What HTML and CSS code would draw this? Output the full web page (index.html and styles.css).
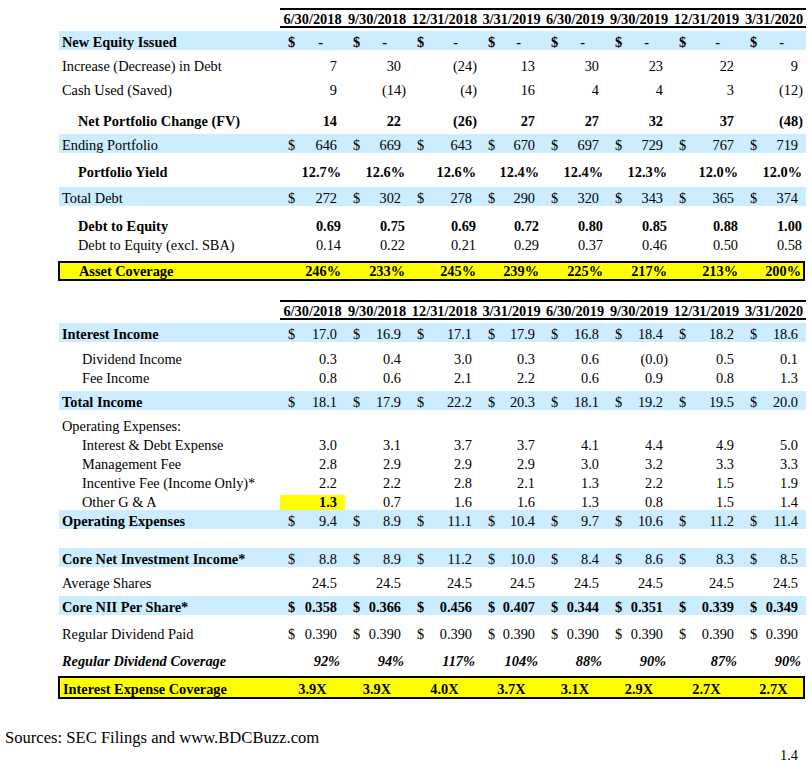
FILE: index.html
```html
<!DOCTYPE html>
<html>
<head>
<meta charset="utf-8">
<link rel="stylesheet" href="styles.css">
</head>
<body>
<div class="sheet">
  <div class="row hdr">
    <div></div>
    <div class="h">6/30/2018</div><div class="h">9/30/2018</div><div class="h">12/31/2018</div><div class="h">3/31/2019</div><div class="h">6/30/2019</div><div class="h">9/30/2019</div><div class="h">12/31/2019</div><div class="h">3/31/2020</div>
  </div>
  <div class="row blue b h19 mt3">
    <div class="lbl">New Equity Issued</div>
    <div class="c"><span class="d">$</span><span class="dash">-</span></div>
    <div class="c"><span class="d">$</span><span class="dash">-</span></div>
    <div class="c"><span class="d">$</span><span class="dash">-</span></div>
    <div class="c"><span class="d">$</span><span class="dash">-</span></div>
    <div class="c"><span class="d">$</span><span class="dash">-</span></div>
    <div class="c"><span class="d">$</span><span class="dash">-</span></div>
    <div class="c"><span class="d">$</span><span class="dash">-</span></div>
    <div class="c"><span class="d">$</span><span class="dash">-</span></div>
  </div>
  <div class="row h24">
    <div class="lbl">Increase (Decrease) in Debt</div>
    <div class="c">7</div><div class="c">30</div><div class="c p">(24)</div><div class="c">13</div><div class="c">30</div><div class="c">23</div><div class="c">22</div><div class="c">9</div>
  </div>
  <div class="row h24">
    <div class="lbl">Cash Used (Saved)</div>
    <div class="c">9</div><div class="c p">(14)</div><div class="c p">(4)</div><div class="c">16</div><div class="c">4</div><div class="c">4</div><div class="c">3</div><div class="c p">(12)</div>
  </div>
  <div class="row b h31">
    <div class="lbl in1">Net Portfolio Change (FV)</div>
    <div class="c">14</div><div class="c">22</div><div class="c p">(26)</div><div class="c">27</div><div class="c">27</div><div class="c">32</div><div class="c">37</div><div class="c p">(48)</div>
  </div>
  <div class="row blue h19 mt5">
    <div class="lbl">Ending Portfolio</div>
    <div class="c"><span class="d">$</span>646</div>
    <div class="c"><span class="d">$</span>669</div>
    <div class="c"><span class="d">$</span>643</div>
    <div class="c"><span class="d">$</span>670</div>
    <div class="c"><span class="d">$</span>697</div>
    <div class="c"><span class="d">$</span>729</div>
    <div class="c"><span class="d">$</span>767</div>
    <div class="c"><span class="d">$</span>719</div>
  </div>
  <div class="row b h27">
    <div class="lbl in1">Portfolio Yield</div>
    <div class="c pc">12.7%</div><div class="c pc">12.6%</div><div class="c pc">12.6%</div><div class="c pc">12.4%</div><div class="c pc">12.4%</div><div class="c pc">12.3%</div><div class="c pc">12.0%</div><div class="c pc">12.0%</div>
  </div>
  <div class="row blue h19 mt7">
    <div class="lbl">Total Debt</div>
    <div class="c"><span class="d">$</span>272</div>
    <div class="c"><span class="d">$</span>302</div>
    <div class="c"><span class="d">$</span>278</div>
    <div class="c"><span class="d">$</span>290</div>
    <div class="c"><span class="d">$</span>320</div>
    <div class="c"><span class="d">$</span>343</div>
    <div class="c"><span class="d">$</span>365</div>
    <div class="c"><span class="d">$</span>374</div>
  </div>
  <div class="row b h28">
    <div class="lbl in1">Debt to Equity</div>
    <div class="c pc">0.69</div><div class="c pc">0.75</div><div class="c pc">0.69</div><div class="c pc">0.72</div><div class="c pc">0.80</div><div class="c pc">0.85</div><div class="c pc">0.88</div><div class="c pc">1.00</div>
  </div>
  <div class="row h19">
    <div class="lbl in1">Debt to Equity (excl. SBA)</div>
    <div class="c pc">0.14</div><div class="c pc">0.22</div><div class="c pc">0.21</div><div class="c pc">0.29</div><div class="c pc">0.37</div><div class="c pc">0.46</div><div class="c pc">0.50</div><div class="c pc">0.58</div>
  </div>
  <div class="row box b mt8 bx16">
    <div class="lbl in1">Asset Coverage</div>
    <div class="c pc">246%</div><div class="c pc">233%</div><div class="c pc">245%</div><div class="c pc">239%</div><div class="c pc">225%</div><div class="c pc">217%</div><div class="c pc">213%</div><div class="c pc">200%</div>
  </div>

  <div class="row hdr mt19">
    <div></div>
    <div class="h">6/30/2018</div><div class="h">9/30/2018</div><div class="h">12/31/2018</div><div class="h">3/31/2019</div><div class="h">6/30/2019</div><div class="h">9/30/2019</div><div class="h">12/31/2019</div><div class="h">3/31/2020</div>
  </div>
  <div class="row blue h19 mt3">
    <div class="lbl b">Interest Income</div>
    <div class="c"><span class="d">$</span>17.0</div>
    <div class="c"><span class="d">$</span>16.9</div>
    <div class="c"><span class="d">$</span>17.1</div>
    <div class="c"><span class="d">$</span>17.9</div>
    <div class="c"><span class="d">$</span>16.8</div>
    <div class="c"><span class="d">$</span>18.4</div>
    <div class="c"><span class="d">$</span>18.2</div>
    <div class="c"><span class="d">$</span>18.6</div>
  </div>
  <div class="row h25">
    <div class="lbl in2">Dividend Income</div>
    <div class="c">0.3</div><div class="c">0.4</div><div class="c">3.0</div><div class="c">0.3</div><div class="c">0.6</div><div class="c p">(0.0)</div><div class="c">0.5</div><div class="c">0.1</div>
  </div>
  <div class="row h19">
    <div class="lbl in2">Fee Income</div>
    <div class="c">0.8</div><div class="c">0.6</div><div class="c">2.1</div><div class="c">2.2</div><div class="c">0.6</div><div class="c">0.9</div><div class="c">0.8</div><div class="c">1.3</div>
  </div>
  <div class="row blue h19 mt5">
    <div class="lbl b">Total Income</div>
    <div class="c"><span class="d">$</span>18.1</div>
    <div class="c"><span class="d">$</span>17.9</div>
    <div class="c"><span class="d">$</span>22.2</div>
    <div class="c"><span class="d">$</span>20.3</div>
    <div class="c"><span class="d">$</span>18.1</div>
    <div class="c"><span class="d">$</span>19.2</div>
    <div class="c"><span class="d">$</span>19.5</div>
    <div class="c"><span class="d">$</span>20.0</div>
  </div>
  <div class="row h24">
    <div class="lbl">Operating Expenses:</div>
  </div>
  <div class="row h19">
    <div class="lbl in2">Interest &amp; Debt Expense</div>
    <div class="c">3.0</div><div class="c">3.1</div><div class="c">3.7</div><div class="c">3.7</div><div class="c">4.1</div><div class="c">4.4</div><div class="c">4.9</div><div class="c">5.0</div>
  </div>
  <div class="row h19">
    <div class="lbl in2">Management Fee</div>
    <div class="c">2.8</div><div class="c">2.9</div><div class="c">2.9</div><div class="c">2.9</div><div class="c">3.0</div><div class="c">3.2</div><div class="c">3.3</div><div class="c">3.3</div>
  </div>
  <div class="row h19">
    <div class="lbl in2">Incentive Fee (Income Only)*</div>
    <div class="c">2.2</div><div class="c">2.2</div><div class="c">2.8</div><div class="c">2.1</div><div class="c">1.3</div><div class="c">2.2</div><div class="c">1.5</div><div class="c">1.9</div>
  </div>
  <div class="row h19">
    <div class="lbl in2">Other G &amp; A</div>
    <div class="c hl b">1.3</div><div class="c">0.7</div><div class="c">1.6</div><div class="c">1.6</div><div class="c">1.3</div><div class="c">0.8</div><div class="c">1.5</div><div class="c">1.4</div>
  </div>
  <div class="row blue h19">
    <div class="lbl b">Operating Expenses</div>
    <div class="c"><span class="d">$</span>9.4</div>
    <div class="c"><span class="d">$</span>8.9</div>
    <div class="c"><span class="d">$</span>11.1</div>
    <div class="c"><span class="d">$</span>10.4</div>
    <div class="c"><span class="d">$</span>9.7</div>
    <div class="c"><span class="d">$</span>10.6</div>
    <div class="c"><span class="d">$</span>11.2</div>
    <div class="c"><span class="d">$</span>11.4</div>
  </div>
  <div class="row blue h19 mt19">
    <div class="lbl b">Core Net Investment Income*</div>
    <div class="c"><span class="d">$</span>8.8</div>
    <div class="c"><span class="d">$</span>8.9</div>
    <div class="c"><span class="d">$</span>11.2</div>
    <div class="c"><span class="d">$</span>10.0</div>
    <div class="c"><span class="d">$</span>8.4</div>
    <div class="c"><span class="d">$</span>8.6</div>
    <div class="c"><span class="d">$</span>8.3</div>
    <div class="c"><span class="d">$</span>8.5</div>
  </div>
  <div class="row h24">
    <div class="lbl">Average Shares</div>
    <div class="c">24.5</div><div class="c">24.5</div><div class="c">24.5</div><div class="c">24.5</div><div class="c">24.5</div><div class="c">24.5</div><div class="c">24.5</div><div class="c">24.5</div>
  </div>
  <div class="row blue b h19 mt5">
    <div class="lbl">Core NII Per Share*</div>
    <div class="c"><span class="d">$</span>0.358</div>
    <div class="c"><span class="d">$</span>0.366</div>
    <div class="c"><span class="d">$</span>0.456</div>
    <div class="c"><span class="d">$</span>0.407</div>
    <div class="c"><span class="d">$</span>0.344</div>
    <div class="c"><span class="d">$</span>0.351</div>
    <div class="c"><span class="d">$</span>0.339</div>
    <div class="c"><span class="d">$</span>0.349</div>
  </div>
  <div class="row h27">
    <div class="lbl">Regular Dividend Paid</div>
    <div class="c"><span class="d">$</span>0.390</div>
    <div class="c"><span class="d">$</span>0.390</div>
    <div class="c"><span class="d">$</span>0.390</div>
    <div class="c"><span class="d">$</span>0.390</div>
    <div class="c"><span class="d">$</span>0.390</div>
    <div class="c"><span class="d">$</span>0.390</div>
    <div class="c"><span class="d">$</span>0.390</div>
    <div class="c"><span class="d">$</span>0.390</div>
  </div>
  <div class="row b it h27">
    <div class="lbl">Regular Dividend Coverage</div>
    <div class="c ic">92%</div><div class="c ic">94%</div><div class="c ic">117%</div><div class="c ic">104%</div><div class="c ic">88%</div><div class="c ic">90%</div><div class="c ic">87%</div><div class="c ic">90%</div>
  </div>
  <div class="row box b mt7 bx19">
    <div class="lbl">Interest Expense Coverage</div>
    <div class="c ctr">3.9X</div><div class="c ctr">3.9X</div><div class="c ctr">4.0X</div><div class="c ctr">3.7X</div><div class="c ctr">3.1X</div><div class="c ctr">2.9X</div><div class="c ctr">2.7X</div><div class="c ctr">2.7X</div>
  </div>
</div>
<p class="src">Sources: SEC Filings and www.BDCBuzz.com</p>
<p class="pg">1.4</p>
</body>
</html>
```

FILE: styles.css
```css
html {
  margin: 0;
  padding: 0;
  overflow: hidden;
  background: #fff;
}
body {
  margin: 0;
  padding: 0;
  font-family: "Liberation Serif", "Times New Roman", serif;
  font-size: 14.35px;
  color: #000;
  width: 812px;
}
.sheet {
  margin-left: 59px;
  width: 747px;
}
.row {
  display: grid;
  grid-template-columns: 221px 65px 64px 71px 63px 64px 64px 71px 64px;
  align-items: end;
  line-height: 15px;
}
.row > div {
  padding-bottom: 0;
  white-space: nowrap;
}
.h19 { height: 19px; }
.h24 { height: 24px; }
.h25 { height: 25px; }
.h27 { height: 27px; }
.h28 { height: 28px; }
.h31 { height: 31px; }
.mt3 { margin-top: 3px; }
.mt5 { margin-top: 5px; }
.mt7 { margin-top: 7px; }
.mt8 { margin-top: 8px; }
.mt19 { margin-top: 19px; }

.hdr {
  margin-top: 8px;
  align-items: stretch;
}
.hdr.mt19 { margin-top: 19px; }
.hdr .h {
  border-top: 2px solid #000;
  border-bottom: 2px solid #000;
  text-align: center;
  font-weight: bold;
  height: 16px;
  line-height: 18px;
}
.blue { background: #ccecff; }
.b { font-weight: bold; }
.it { font-style: italic; }

.lbl { padding-left: 3px; }
.lbl.in1 { padding-left: 19px; }
.lbl.in2 { padding-left: 23px; }

.c {
  display: flex;
  justify-content: flex-end;
  padding-left: 8px;
  padding-right: 8px;
}
.c .d { margin-right: auto; }
.c .dash { padding-right: 14px; }
.c.p { padding-right: 3px; }
.c.pc { padding-right: 4px; }
.c.ic { padding-right: 5px; }
.c.ctr {
  justify-content: center;
  padding-left: 0;
  padding-right: 0;
}
.c.hl { background: #ffff00; }

.box {
  background: #ffff00;
  border: 2px solid #000;
  margin-left: -1px;
  width: 747px;
  box-sizing: border-box;
  grid-template-columns: 220px 65px 64px 71px 63px 64px 64px 71px 63px;
}
.bx16 { height: 20px; }
.bx19 { height: 23px; }

.src {
  margin: 29px 0 0 0;
  padding-left: 5px;
  font-size: 16.6px;
  line-height: 19px;
}
.pg {
  margin: 3px 0 0 0;
  padding-right: 14px;
  text-align: right;
  line-height: 11px;
}
```
